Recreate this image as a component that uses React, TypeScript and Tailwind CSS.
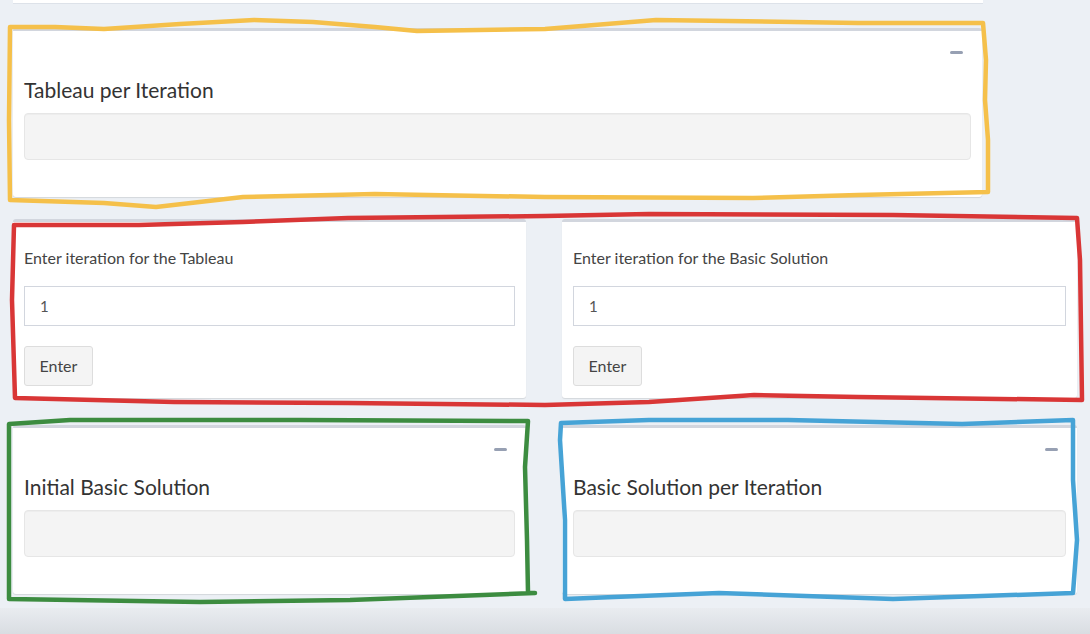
import React from 'react'

// hand-drawn highlight outlines lying over the panels
const marks = [
  {
    color: '#f5c04a',
    d: 'M10,27 L55,27 L104,29 L180,24 L254,20 L313,22 L375,27 L417,31 L545,29 L656,20 L858,23 L983,23 L986,60 L985,100 L988,140 L988,192 L858,195 L753,198 L545,197 L375,194 L243,197 L156,207 L104,203 L10,200 L9,120 Z',
  },
  {
    color: '#d93636',
    d: 'M14,225 L139,225 L243,222 L348,218 L545,216 L649,214 L893,215 L1077,218 L1080,260 L1081,330 L1082,400 L858,397 L754,395 L649,402 L545,405 L348,403 L174,402 L15,398 L12,300 Z',
  },
  {
    color: '#3c8c40',
    d: 'M9,424 L70,420 L300,420 L528,421 L525,467 L527,540 L528,593 L535,593 L350,600 L200,602 L9,599 L9,500 Z',
  },
  {
    color: '#46a3d6',
    d: 'M561,423 L649,420 L788,420 L962,424 L1073,420 L1073,480 L1077,540 L1073,593 L893,599 L719,593 L614,597 L565,599 L565,520 L560,440 Z',
  },
]

function Minus() {
  return <span className="block w-[13px] h-[3px] rounded-full bg-[#97a0b3]" />
}

function OutputBox({ title, className }: { title: string; className?: string }) {
  return (
    <div className={`bg-white border-t-[3px] border-[#d2d6de] rounded-[3px] shadow-[0_1px_1px_rgba(0,0,0,0.1)] px-[11px] pb-[37px] ${className ?? ''}`}>
      <div className="h-[42px] flex items-center justify-end pr-[8px]">
        <Minus />
      </div>
      <h3 className="mt-[3px] mb-[9px] text-[21px] leading-[28px] text-[#333]">{title}</h3>
      <div className="h-[47px] rounded-[4px] bg-[#f4f4f4] border border-[#e6e6e6] shadow-[inset_0_1px_1px_rgba(0,0,0,0.03)]" />
    </div>
  )
}

function IterationBox({ label, className }: { label: string; className?: string }) {
  return (
    <div className={`bg-white border-t-[3px] border-[#d2d6de] rounded-[3px] shadow-[0_1px_1px_rgba(0,0,0,0.1)] px-[11px] pt-[26px] pb-[12px] ${className ?? ''}`}>
      <label className="block text-[16px] leading-[20px] text-[#444]">{label}</label>
      <input
        defaultValue="1"
        className="block w-full mt-[18px] h-[40px] border border-[#d2d6de] px-[15px] text-[15px] text-[#555] outline-none"
      />
      <button className="mt-[20px] h-[40px] w-[69px] rounded-[3px] bg-[#f4f4f4] border border-[#ddd] text-[16px] text-[#444]">
        Enter
      </button>
    </div>
  )
}

export default function App() {
  return (
    <div className="relative h-[634px] w-[1090px] overflow-hidden bg-[#ecf0f5] font-['Lato',sans-serif] flex flex-col">
      <div className="ml-[13px] w-[970px] h-[4px] bg-white border-b border-[#dde2e9]" />

      <OutputBox title="Tableau per Iteration" className="mt-[24px] ml-[13px] w-[969px]" />

      <div className="mt-[22px] mx-[13px] flex gap-[36px]">
        <IterationBox label="Enter iteration for the Tableau" className="w-[513px]" />
        <IterationBox label="Enter iteration for the Basic Solution" className="flex-1" />
      </div>

      <div className="mt-[27px] mx-[13px] flex gap-[36px]">
        <OutputBox title="Initial Basic Solution" className="w-[513px]" />
        <OutputBox title="Basic Solution per Iteration" className="flex-1" />
      </div>

      <div className="mt-auto h-[26px] bg-gradient-to-b from-[#e9ecf0] to-[#d9dde2]" />

      <svg className="absolute inset-0 pointer-events-none" width="1090" height="634" viewBox="0 0 1090 634">
        {marks.map((m) => (
          <path key={m.color} d={m.d} fill="none" stroke={m.color} strokeWidth={4.5} strokeLinejoin="round" strokeLinecap="round" />
        ))}
      </svg>
    </div>
  )
}
